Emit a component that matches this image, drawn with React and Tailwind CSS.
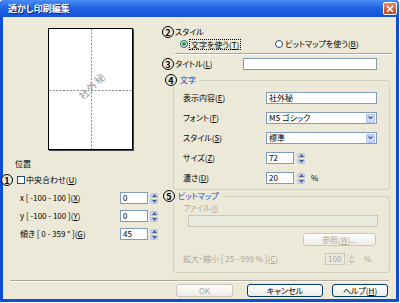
import React from "react";

function Mn({ k }) {
  return <span className="underline">{k}</span>;
}

function Num({ n, className = "" }) {
  return (
    <span
      className={
        "flex h-[12px] w-[12px] shrink-0 items-center justify-center rounded-full border border-black bg-[#ece9d8] text-[9px] font-bold leading-none text-black " +
        className
      }
    >
      {n}
    </span>
  );
}

function Spin({ disabled }) {
  const c = disabled ? "#c9c7ba" : "#4d6185";
  const box = disabled
    ? "flex h-[5px] items-center justify-center bg-[#f0efe8] border border-[#dcdad0]"
    : "flex h-[5px] items-center justify-center bg-[#c9d8fc] border border-[#b2c4ef]";
  return (
    <div className="flex w-[8px] flex-col gap-px">
      <div className={box + " rounded-t-[2px]"}>
        <svg width="5" height="3">
          <path d="M0 3L2.5 0L5 3Z" fill={c} />
        </svg>
      </div>
      <div className={box + " rounded-b-[2px]"}>
        <svg width="5" height="3">
          <path d="M0 0L2.5 3L5 0Z" fill={c} />
        </svg>
      </div>
    </div>
  );
}

function Field({ className = "", children, disabled }) {
  return (
    <div
      className={
        (disabled
          ? "border-[#c9c7ba] bg-[#ebeadf] text-[#aca899] "
          : "border-[#7f9db9] bg-white text-black ") +
        "flex h-[12px] items-center border px-[2px] text-[8px] leading-none " +
        className
      }
    >
      {children}
    </div>
  );
}

function Select({ value }) {
  return (
    <div className="flex h-[12px] w-[111px] items-center border border-[#7f9db9] bg-white pl-[2px] text-[8px] leading-none">
      <span className="flex-1">{value}</span>
      <span className="mr-px flex h-[9px] w-[9px] items-center justify-center rounded-[1px] border border-[#b2c4ef] bg-[#c9d8fc]">
        <svg width="5" height="4">
          <path d="M0.5 0.5L2.5 2.5L4.5 0.5" stroke="#4d6185" strokeWidth="1.2" fill="none" />
        </svg>
      </span>
    </div>
  );
}

function Btn({ children, disabled, className = "" }) {
  return (
    <div
      className={
        (disabled
          ? "border-[#c9c7ba] text-[#aca899] "
          : "border-[#003c74] text-black ") +
        "flex h-[13px] items-center justify-center rounded-[3px] border bg-gradient-to-b from-white to-[#ecebe5] text-[8px] leading-none " +
        className
      }
    >
      {children}
    </div>
  );
}

function Row({ label, children }) {
  return (
    <div className="flex h-[12px] items-center">
      <span className="w-[83px] leading-[12px]">{label}</span>
      {children}
    </div>
  );
}

export default function App() {
  return (
    <div className="h-[303px] w-[400px] overflow-hidden bg-white font-['Noto_Sans_CJK_JP','Noto_Sans',sans-serif] text-[8px] leading-[12px] text-black [font-feature-settings:'palt']">
      <div className="flex h-[302px] w-[399px] flex-col rounded-t-[4px] bg-[#0c4fd6]">
        {/* title bar */}
        <div className="flex h-[17px] items-center justify-between rounded-t-[4px] bg-gradient-to-b from-[#4a8ef5] via-[#1f5fe2] to-[#1654d8] pl-[8px] pr-[2px]">
          <span className="text-[9px] font-bold text-white [text-shadow:1px_1px_0_#0a246a]">
            透かし印刷編集
          </span>
          <div className="flex h-[13px] w-[14px] items-center justify-center rounded-[2px] border border-white bg-gradient-to-b from-[#e88a6c] to-[#c7401a]">
            <svg width="8" height="8">
              <path d="M1 1L7 7M7 1L1 7" stroke="white" strokeWidth="1.6" />
            </svg>
          </div>
        </div>

        {/* body */}
        <div className="mx-[3px] mb-[3px] flex flex-1 flex-col bg-[#ece9d8]">
          <div className="flex h-[263px]">
            {/* left column */}
            <div className="flex w-[157px] flex-col">
              <div className="relative ml-[45px] mt-[11px] h-[122px] w-[85px] border border-black bg-white shadow-[1px_1px_0_#444]">
                <svg className="absolute left-0 top-0" width="83" height="120">
                  <line x1="42.5" y1="0" x2="42.5" y2="120" stroke="#8a8a8a" strokeDasharray="2 1.5" />
                  <line x1="0" y1="61.5" x2="83" y2="61.5" stroke="#8a8a8a" strokeDasharray="2 1.5" />
                </svg>
                <span className="absolute left-[43px] top-[57px] -translate-x-1/2 -translate-y-1/2 -rotate-45 whitespace-nowrap text-[10px] tracking-[1px] text-[#999999]">
                  社外秘
                </span>
              </div>
              <span className="ml-[12px] mt-[8px] h-[12px]">位置</span>
              <div className="-ml-[2px] mt-[4px] flex h-[12px] items-center">
                <Num n="1" />
                <span className="ml-[4px] h-[8px] w-[8px] border border-[#1c5180] bg-white" />
                <span className="ml-[1px]">
                  中央合わせ(<Mn k="U" />)
                </span>
              </div>
              {[
                ["x [ -100 - 100 ](", "X", ")", "0"],
                ["y [ -100 - 100 ](", "Y", ")", "0"],
                ["傾き [ 0 - 359 ° ](", "G", ")", "45"],
              ].map(([a, k, b, v]) => (
                <div key={k} className="ml-[17px] mt-[6px] flex h-[12px] items-center">
                  <span className="w-[100px] whitespace-nowrap">
                    {a}
                    <Mn k={k} />
                    {b}
                  </span>
                  <Field className="w-[28px]">{v}</Field>
                  <div className="ml-[2px]">
                    <Spin />
                  </div>
                </div>
              ))}
            </div>

            {/* right column */}
            <div className="flex flex-1 flex-col">
              <div className="ml-[2px] mt-[9px] flex h-[12px] items-center">
                <Num n="2" />
                <span className="ml-[1px]">スタイル</span>
              </div>
              <div className="flex h-[12px] items-center">
                <span className="ml-[20px] flex h-[8px] w-[8px] items-center justify-center rounded-full border border-[#1c5180] bg-white">
                  <span className="h-[4px] w-[4px] rounded-full bg-[#2a9a2a]" />
                </span>
                <span className="ml-[1px] border border-dotted border-black px-px leading-[9px]">
                  文字を使う(<Mn k="T" />)
                </span>
                <span className="ml-[34px] h-[8px] w-[8px] rounded-full border border-[#1c5180] bg-white" />
                <span className="ml-[2px]">
                  ビットマップを使う(<Mn k="B" />)
                </span>
              </div>
              <div className="ml-[15px] mt-[3px] h-[2px] w-[217px] border-b border-t border-b-white border-t-[#aca899]" />
              <div className="ml-[2px] mt-[3px] flex h-[12px] items-center">
                <Num n="3" />
                <span className="ml-[1px] w-[68px]">
                  タイトル(<Mn k="L" />)
                </span>
                <Field className="w-[134px]" />
              </div>

              {/* group 4 */}
              <div className="relative ml-[13px] mt-[10px] flex h-[110px] w-[217px] flex-col gap-[8px] rounded-[3px] border border-[#d0d0bf] pl-[9px] pt-[11px]">
                <div className="absolute -left-[9px] -top-[7px] flex items-center bg-[#ece9d8] pr-[3px]">
                  <Num n="4" />
                  <span className="ml-[3px] text-[#1a45c0]">文字</span>
                </div>
                <Row label={<>表示内容(<Mn k="E" />)</>}>
                  <Field className="w-[111px]">社外秘</Field>
                </Row>
                <Row label={<>フォント(<Mn k="F" />)</>}>
                  <Select value="MS ゴシック" />
                </Row>
                <Row label={<>スタイル(<Mn k="S" />)</>}>
                  <Select value="標準" />
                </Row>
                <Row label={<>サイズ(<Mn k="Z" />)</>}>
                  <Field className="w-[28px]">72</Field>
                  <div className="ml-[3px]">
                    <Spin />
                  </div>
                </Row>
                <Row label={<>濃さ(<Mn k="D" />)</>}>
                  <Field className="w-[28px]">20</Field>
                  <div className="ml-[3px]">
                    <Spin />
                  </div>
                  <span className="ml-[6px]">%</span>
                </Row>
              </div>

              {/* group 5 */}
              <div className="relative ml-[13px] mt-[6px] flex h-[77px] w-[217px] flex-col rounded-[3px] border border-[#d0d0bf] pl-[9px] pt-[5px] text-[#aca899]">
                <div className="absolute -left-[11px] -top-[7px] flex items-center bg-[#ece9d8] pr-[3px]">
                  <Num n="5" />
                  <span className="ml-[3px] text-[#1a45c0]">ビットマップ</span>
                </div>
                <span className="h-[12px]">
                  ファイル(<Mn k="I" />)
                </span>
                <Field disabled className="ml-[5px] mt-[1px] w-[190px]" />
                <div className="mr-[13px] mt-[6px] flex justify-end">
                  <Btn disabled className="w-[73px]">
                    参照(<Mn k="W" />)...
                  </Btn>
                </div>
                <div className="mt-[7px] flex h-[12px] items-center">
                  <span className="w-[142px] whitespace-nowrap">
                    拡大・縮小 [ 25 - 999 % ](<Mn k="C" />)
                  </span>
                  <Field disabled className="w-[20px]">100</Field>
                  <div className="ml-[2px]">
                    <Spin disabled />
                  </div>
                  <span className="ml-[9px]">%</span>
                </div>
              </div>
            </div>
          </div>

          <div className="mx-[7px] h-[2px] border-b border-t border-b-white border-t-[#aca899]" />
          <div className="mt-[2px] flex pl-[173px]">
            <Btn disabled className="w-[57px]">OK</Btn>
            <Btn className="ml-[14px] w-[76px]">キャンセル</Btn>
            <Btn className="ml-[9px] w-[56px]">
              ヘルプ(<Mn k="H" />)
            </Btn>
          </div>
        </div>
      </div>
    </div>
  );
}
